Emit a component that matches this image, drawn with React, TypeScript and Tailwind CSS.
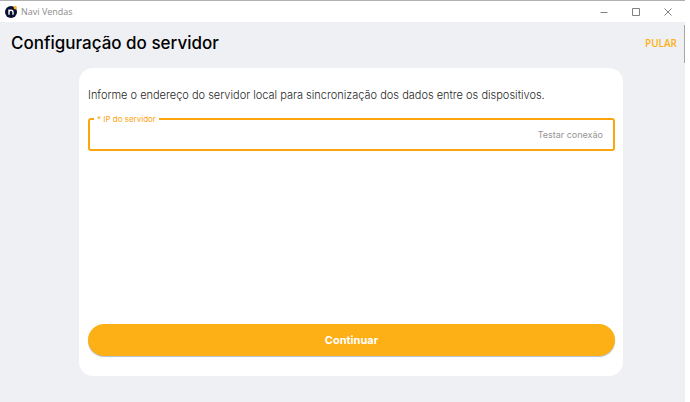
import { useState } from 'react';

const WindowControls = () => (
  <div className="flex h-full items-center pr-px text-[#808080]">
    <button type="button" aria-label="Minimizar" className="flex h-full w-8 items-center justify-center">
      <svg className="h-2 w-2" viewBox="0 0 8 8" stroke="currentColor" fill="none"><path d="M0.5 4.5h7" /></svg>
    </button>
    <button type="button" aria-label="Maximizar" className="flex h-full w-8 items-center justify-center">
      <svg className="h-2 w-2" viewBox="0 0 8 8" stroke="currentColor" fill="none"><path d="M0.5 0.5h7v7h-7z" /></svg>
    </button>
    <button type="button" aria-label="Fechar" className="flex h-full w-8 items-center justify-center">
      <svg className="h-2 w-2" viewBox="0 0 8 8" stroke="currentColor" fill="none"><path d="M0.5 0.5l7 7M7.5 0.5l-7 7" /></svg>
    </button>
  </div>
);

const Logo = () => (
  <svg className="h-3 w-3" viewBox="0 0 12 12" fill="none">
    <circle cx="6" cy="6" r="6" fill="#0a1033" />
    <path d="M4 8.8V3.6M4 6.2C4 4.8 4.8 4.2 6 4.2S8 4.8 8 6.2V8.8" stroke="#ffffff" strokeWidth="1.4" />
    <circle cx="10.3" cy="1.7" r="1.7" fill="#fdb015" />
  </svg>
);

export default function App() {
  const [ip, setIp] = useState('');

  return (
    <div className="min-h-screen bg-white pr-[5px] font-['Inter',sans-serif]">
      <div className="relative flex min-h-screen flex-col bg-[#eff0f4]">
        {/* Barra da janela */}
        <header className="flex h-[22px] items-center justify-between border-t border-[#b0b0b0] bg-white pl-[5px]">
          <div className="flex items-center gap-1">
            <Logo />
            <span className="font-['Open_Sans',sans-serif] text-[9px] leading-3 text-[#8c8c8c]">Navi Vendas</span>
          </div>
          <WindowControls />
        </header>

        {/* Barra de rolagem */}
        <div className="absolute top-[25px] right-0 h-[38px] w-px bg-[#a6a6a6]" />

        <div className="flex h-[46px] items-center justify-between pr-2 pb-1 pl-[11px]">
          <h1 className="text-[17px] leading-6 font-medium text-black">Configuração do servidor</h1>
          <button type="button" className="font-['Open_Sans',sans-serif] text-[10px] leading-4 font-semibold text-[#fdb015]">PULAR</button>
        </div>

        {/* Cartão */}
        <main className="mr-[62px] mb-[26px] ml-[79px] flex flex-1 flex-col rounded-[14px] bg-white pt-[19px] pr-2 pb-5 pl-[9px]">
          <p className="text-[11px] leading-4 font-light text-[#1f1f1f]">
            Informe o endereço do servidor local para sincronização dos dados entre os dispositivos.
          </p>

          <fieldset className="mt-2.5 rounded-[3px] border-2 border-[#fda50f] px-1">
            <legend className="px-[3px] text-[8px] leading-3 text-[#fda50f]">
              <label htmlFor="ip-servidor">* IP do servidor</label>
            </legend>
            <div className="flex h-6 items-center pr-1.5 pb-1">
              <input
                id="ip-servidor"
                type="text"
                value={ip}
                onChange={(e) => setIp(e.target.value)}
                className="min-w-0 flex-1 bg-transparent px-1 text-[11px] text-[#333333] outline-none"
              />
              <button type="button" className="text-[9px] leading-4 text-[#949494]">Testar conexão</button>
            </div>
          </fieldset>

          <button
            type="button"
            className="mt-auto h-8 w-full rounded-full bg-[#fdb015] text-[11px] font-bold text-white shadow-[0_1px_1px_#b4bfd2]"
          >
            Continuar
          </button>
        </main>
      </div>
    </div>
  );
}
